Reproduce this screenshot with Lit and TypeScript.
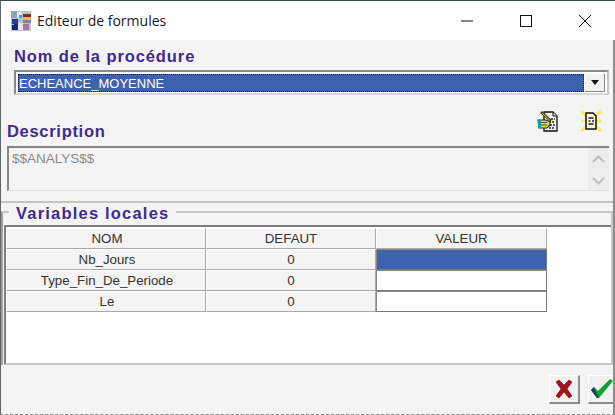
import { LitElement, html, css, svg } from "lit";
import { customElement } from "lit/decorators.js";

const rows = [
  ["Nb_Jours", "0", true],
  ["Type_Fin_De_Periode", "0", false],
  ["Le", "0", false],
] as const;

const appIcon = svg`<svg width="20" height="20" viewBox="0 0 20 20" shape-rendering="crispEdges">
  <rect width="20" height="20" fill="#b9c2c6"/>
  <rect x="0" y="0" width="6" height="7" fill="#8fa6ad"/>
  <rect x="6" y="1" width="5" height="6" fill="#d9eef5"/>
  <rect x="8" y="4" width="3" height="3" fill="#39a6d8"/>
  <rect x="12" y="3" width="8" height="3" fill="#8b2a1c"/>
  <rect x="12" y="6" width="8" height="3" fill="#e9c21c"/>
  <rect x="12" y="9" width="8" height="3" fill="#7d8a8d"/>
  <rect x="1" y="8" width="6" height="5" fill="#1c3aa8"/>
  <rect x="3" y="13" width="4" height="6" fill="#142a88"/>
  <rect x="7" y="12" width="5" height="7" fill="#ece6ee"/>
  <rect x="12" y="13" width="6" height="6" fill="#a8789a"/>
  <rect x="1" y="14" width="3" height="5" fill="#10206a"/>
</svg>`;

const editIcon = svg`<svg width="22" height="22" viewBox="0 0 22 22">
  <path d="M7 2h9l4 4v15H7z" fill="#f4f4f4" stroke="#111" stroke-width="1.300"/>
  <path d="M16 2v4h4" fill="#d8d8d8" stroke="#111"/>
  <path d="M11 9h7M12 12h6M13 15h5M12 18h6" stroke="#222" stroke-width="1.400" stroke-dasharray="2 1"/>
  <path d="M4 2l10 9" stroke="#4a3d10" stroke-width="2.600"/>
  <path d="M5 3l8 7.500" stroke="#d9b93a" stroke-width="1"/>
  <path d="M1 10h8l4 2v3l-3 3H2z" fill="#e6d95a" stroke="#1a2a2a" stroke-width="1.100"/>
  <path d="M4 12.500h6M4 15h6" stroke="#1a2a2a" stroke-width=".8"/>
  <rect x="1" y="10" width="3" height="8" fill="#1e9aa0"/>
</svg>`;

const newIcon = svg`<svg width="20" height="22" viewBox="0 0 20 22">
  <path d="M0 1l6 6M20 1l-6 6M0 21l6-5M20 21l-6-5" stroke="#f5ef4a" stroke-width="2.800"/>
  <path d="M0 11h5M15 11h5" stroke="#f5ef4a" stroke-width="2.400"/>
  <path d="M5 3h7l3 3v13H5z" fill="#f7f5d8" stroke="#111" stroke-width="1.500"/>
  <path d="M7.500 8h5M7.500 11h2M11 11h2M7.500 14h5" stroke="#222" stroke-width="1.500"/>
</svg>`;

const cancelIcon = svg`<svg width="18" height="20" viewBox="0 0 18 20">
  <path d="M1 3l3-2 5 5 5-5 3 2-5 7 5 7-3 2-5-6-5 6-3-2 5-7z" fill="#a4121c" stroke="#6e0a12" stroke-width="0.6"/>
</svg>`;

const okIcon = svg`<svg width="22" height="20" viewBox="0 0 22 20">
  <path d="M0 11l3-3 4 4L19 0l3 2L8 19H6z" fill="#11a02c"/>
  <path d="M0 11l3-3 3 8 2 3H6z" fill="#0d3f63"/>
</svg>`;

@customElement("app-root")
export class AppRoot extends LitElement {
  static styles = css`
    :host {
      display: flex;
      flex-direction: column;
      width: 615px;
      height: 415px;
      box-sizing: border-box;
      overflow: hidden;
      background: #f4f4f4;
      border-top: 1px solid #3a4a4e;
      border-left: 1px solid #5f6668;
      border-bottom: 1px dashed #8a8a8a;
      font-family: "Liberation Sans", Arial, sans-serif;
      color: #333;
    }
    .titlebar {
      flex: none;
      height: 39px;
      background: #fff;
      display: flex;
      align-items: center;
      padding-left: 10px;
      color: #1a1a1a;
      font-family: "Open Sans", "Noto Sans", sans-serif;
      font-size: 14px;
    }
    .titlebar .name { margin-left: 6px; flex: 1; }
    .winbtn {
      width: 59px;
      height: 39px;
      display: flex;
      align-items: center;
      justify-content: center;
    }
    .winbtns { display: flex; margin-right: 1px; }
    .body {
      flex: 1;
      display: flex;
      flex-direction: column;
      min-height: 0;
      border-right: 2px solid #8c8c8c;
    }
    .heading {
      font-weight: bold;
      font-size: 16.500px;
      color: #3f2a8f;
      line-height: 18px;
    }
    .proc { padding: 7px 0 0 13px; }
    .proc .heading { letter-spacing: 0.9px; }
    .combo {
      margin-top: 5px;
      width: 595px;
      height: 25px;
      box-sizing: border-box;
      display: flex;
      border: 2px solid #8a8a8a;
      border-right-color: #c6c6c6;
      border-bottom-color: #d8d8d8;
      background: #fff;
      padding: 2px 2px 1px 2px;
    }
    .combo .value {
      flex: 1;
      background: #3e63ac;
      color: #fff;
      font-size: 13px;
      line-height: 20px;
      outline: 1px dotted #222;
      outline-offset: -1px;
      padding-left: 1px;
      white-space: nowrap;
    }
    .combo .arrow {
      width: 19px;
      margin-left: 1px;
      background: #f2f2f2;
      display: flex;
      align-items: center;
      justify-content: center;
      border-right: 1px solid #888;
      border-bottom: 1px solid #888;
    }
    .tri {
      width: 0;
      height: 0;
      border-left: 4px solid transparent;
      border-right: 4px solid transparent;
      border-top: 5px solid #111;
    }
    .desc { padding: 27px 0 0 6px; }
    .desc .heading { letter-spacing: 0.7px; }
    .desc-head {
      display: flex;
      align-items: flex-start;
      justify-content: space-between;
      height: 24px;
    }
    .tools { display: flex; gap: 22px; margin: -12px 12px 0 0; }
    .memo {
      width: 602px;
      height: 45px;
      box-sizing: border-box;
      display: flex;
      border-top: 2px solid #858585;
      border-left: 2px solid #858585;
      border-bottom: 1px solid #e0e0e0;
    }
    .memo .text {
      flex: 1;
      color: #8a8a8a;
      font-size: 13.500px;
      padding: 3px 0 0 3px;
    }
    .memo .scroll {
      width: 21px;
      background: #ededed;
      display: flex;
      flex-direction: column;
      align-items: center;
      justify-content: space-between;
      padding: 7px 0 5px;
      box-sizing: border-box;
    }
    .sep {
      margin-top: 10px;
      height: 2px;
      background: #c4c4c4;
    }
    .group {
      position: relative;
      margin: 8px 0 0 0;
      padding: 12px 0 0 1px;
      border-top: 2px solid #c6c6c6;
      border-left: 2px solid #a0a0a0;
      border-right: 2px solid #c6c6c6;
      height: 154px;
      box-sizing: border-box;
    }
    .legend {
      position: absolute;
      left: 6px;
      top: -9px;
      padding: 0 7px;
      letter-spacing: 1.2px;
      background: #f4f4f4;
    }
    .gridbox {
      height: 140px;
      box-sizing: border-box;
      background: #fff;
      border-top: 2px solid #7d7d7d;
      border-left: 2px solid #7d7d7d;
      border-bottom: 2px solid #c8c8c8;
      padding-top: 1px;
      display: grid;
      grid-template-columns: 200px 170px 171px;
      grid-auto-rows: 21px;
      align-content: start;
    }
    .cell {
      box-sizing: border-box;
      background: #f4f4f4;
      border-right: 1px solid #a8a8a8;
      border-bottom: 1px solid #a8a8a8;
      border-top: 1px solid #fff;
      border-left: 1px solid #fff;
      text-align: center;
      font-size: 13.300px;
      line-height: 20px;
      color: #333;
    }
    .cell.name { padding-left: 2px; }
    .cell.input { background: #fff; border-top-color: #8a8a8a; border-left-color: #8a8a8a; border-right-color: #777; border-bottom-color: #777; }
    .cell.sel { background: #3e63ac; }
    .footer {
      flex: 1;
      display: flex;
      justify-content: flex-end;
      align-items: flex-start;
      gap: 8px;
      padding: 10px 0 0 0;
    }
    .btn {
      width: 31px;
      height: 29px;
      box-sizing: border-box;
      border: 1px solid #fff;
      border-right: 2px solid #8a8a8a;
      border-bottom: 2px solid #8a8a8a;
      background: #f1f1f1;
      display: flex;
      align-items: center;
      justify-content: center;
    }
    .btn.ok { width: 25px; border-right: none; justify-content: flex-start; padding-left: 2px; overflow: hidden; }
  `;

  render() {
    return html`
      <div class="titlebar">
        ${appIcon}
        <span class="name">Editeur de formules</span>
        <div class="winbtns">
          <div class="winbtn"><svg width="12" height="12" viewBox="0 0 12 12"><path d="M0 6h12" stroke="#111" /></svg></div>
          <div class="winbtn"><svg width="12" height="12" viewBox="0 0 12 12"><rect x=".5" y=".5" width="11" height="11" fill="none" stroke="#111"/></svg></div>
          <div class="winbtn"><svg width="12" height="12" viewBox="0 0 12 12"><path d="M0 0l12 12M12 0L0 12" stroke="#111"/></svg></div>
        </div>
      </div>
      <div class="body">
        <div class="proc">
          <div class="heading">Nom de la procédure</div>
          <div class="combo">
            <div class="value">ECHEANCE_MOYENNE</div>
            <div class="arrow"><div class="tri"></div></div>
          </div>
        </div>
        <div class="desc">
          <div class="desc-head">
            <div class="heading">Description</div>
            <div class="tools">${editIcon}${newIcon}</div>
          </div>
          <div class="memo">
            <div class="text">$$ANALYS$$</div>
            <div class="scroll">
              <svg width="13" height="8" viewBox="0 0 13 8"><path d="M1 7l5.500-5.500L12 7" fill="none" stroke="#bdbdbd" stroke-width="2"/></svg>
              <svg width="13" height="8" viewBox="0 0 13 8"><path d="M1 1l5.500 5.500L12 1" fill="none" stroke="#bdbdbd" stroke-width="2"/></svg>
            </div>
          </div>
        </div>
        <div class="sep"></div>
        <div class="group">
          <div class="heading legend">Variables locales</div>
          <div class="gridbox">
            <div class="cell name">NOM</div>
            <div class="cell">DEFAUT</div>
            <div class="cell">VALEUR</div>
            ${rows.map(
              ([n, d, sel]) => html`
                <div class="cell name">${n}</div>
                <div class="cell">${d}</div>
                <div class="cell input ${sel ? "sel" : ""}"></div>
              `
            )}
          </div>
        </div>
        <div class="footer">
          <div class="btn">${cancelIcon}</div>
          <div class="btn ok">${okIcon}</div>
        </div>
      </div>
    `;
  }
}
